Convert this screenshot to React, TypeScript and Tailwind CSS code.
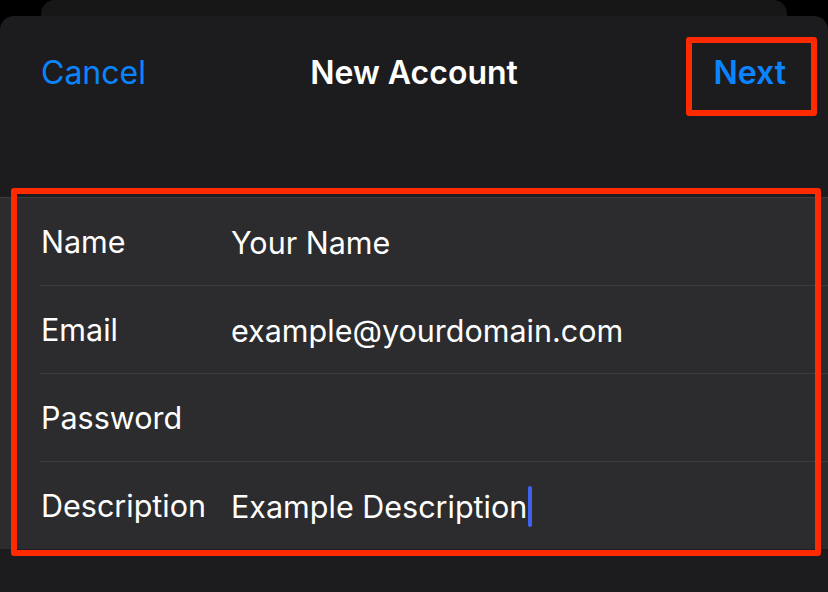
import React from "react";

const rows: { label: string; value: string; caret?: boolean }[] = [
  { label: "Name", value: "Your Name" },
  { label: "Email", value: "example@yourdomain.com" },
  { label: "Password", value: "" },
  { label: "Description", value: "Example Description", caret: true },
];

export default function App() {
  return (
    <div
      className="relative w-[828px] h-[592px] overflow-hidden bg-black flex flex-col"
      style={{ fontFamily: "Inter, 'Noto Sans', sans-serif" }}
    >
      {/* card behind */}
      <div className="mx-[41px] h-[30px] -mb-[14px] rounded-t-[14px] bg-[#171717] shrink-0" />
      {/* sheet */}
      <div className="relative z-10 flex-1 flex flex-col bg-[#1c1c1e] rounded-t-[14px]">
        {/* nav */}
        <div className="grid grid-cols-3 items-center h-[112px] pt-[2px] shrink-0">
          <div className="pl-[41px] text-[32px] leading-none text-[#0a84ff]">Cancel</div>
          <div className="text-center text-[32px] leading-none font-semibold text-white">New Account</div>
          <div className="flex justify-end pr-[42px] text-[32px] leading-none font-semibold text-[#0a84ff]">
            Next
          </div>
        </div>
        <div className="h-[69px] shrink-0" />
        {/* table */}
        <div className="bg-[#2c2c2e] border-t border-[#3d3d40]">
          {rows.map((r, i) => (
            <div key={r.label}>
              <div className="flex items-center h-[87px] pl-[41px] text-[30.5px] leading-none text-white">
                <div className="w-[190px] shrink-0 pt-[1px]">{r.label}</div>
                <div className="flex items-center">
                  <span className="pt-[4px]">{r.value}</span>
                  {r.caret && (
                    <span className="inline-block w-[4px] h-[41px] rounded-full bg-[#3f63ee] ml-[1px] mt-[2px]" />
                  )}
                </div>
              </div>
              {i < rows.length - 1 && <div className="ml-[40px] h-px bg-[#3d3d40]" />}
            </div>
          ))}
        </div>
      </div>
      {/* annotation boxes */}
      <div className="absolute z-20 left-[686px] top-[37px] w-[131px] h-[79px] border-[6px] border-[#ff2a00] rounded-[3px]" />
      <div className="absolute z-20 left-[11px] top-[188px] w-[810px] h-[368px] border-[6px] border-[#ff2a00] rounded-[3px]" />
    </div>
  );
}
